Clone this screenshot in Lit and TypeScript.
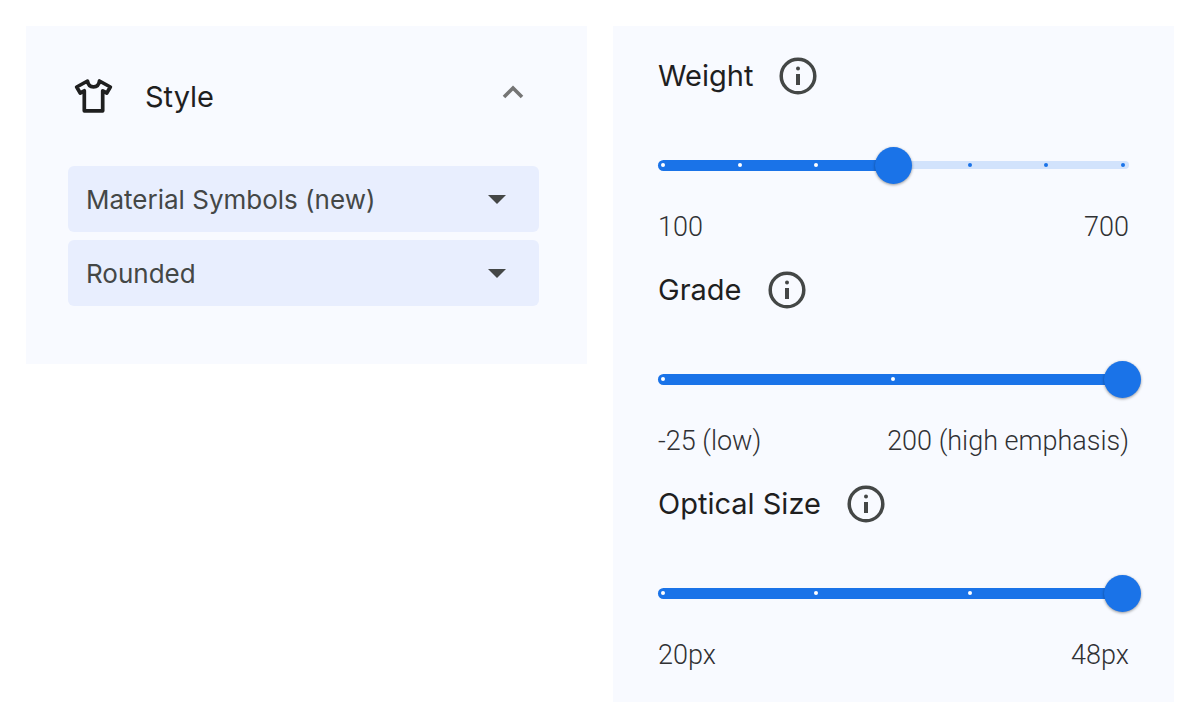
import { LitElement, html, css } from "lit";
import { customElement, property, state } from "lit/decorators.js";

@customElement("axis-slider")
class AxisSlider extends LitElement {
  @property() label = "";
  @property() low = "";
  @property() high = "";
  @property({ type: Number }) steps = 2;
  @property({ type: Number }) value = 0;

  static styles = css`
    :host {
      display: block;
      color: #1f1f1f;
    }
    .head {
      display: flex;
      align-items: center;
      gap: 25px;
      height: 40px;
      margin-bottom: 50px;
    }
    .name {
      font-size: 29px;
      line-height: 40px;
    }
    .info {
      display: flex;
      padding: 0;
      border: 0;
      background: none;
      color: #444746;
      cursor: pointer;
    }
    .slider {
      display: grid;
      align-items: center;
      height: 38px;
      margin-bottom: 28px;
    }
    .slider > * {
      grid-area: 1 / 1;
    }
    .track {
      height: 8px;
      border-radius: 4px;
      background: #d2e3fc;
    }
    .fill {
      height: 11px;
      border-radius: 6px;
      background: #1a73e8;
    }
    .ticks {
      display: flex;
      justify-content: space-between;
      padding: 0 4px 0 3px;
    }
    .tick {
      width: 4px;
      height: 4px;
      border-radius: 50%;
      background: #1a73e8;
    }
    .tick.on {
      background: #fff;
    }
    .range {
      appearance: none;
      height: 37px;
      margin: 0 -12px 0 -13px;
      background: none;
      cursor: pointer;
    }
    .range::-webkit-slider-thumb {
      appearance: none;
      width: 37px;
      height: 37px;
      border-radius: 50%;
      background: #1a73e8;
      box-shadow: 0 1px 3px rgba(0, 0, 0, 0.4);
    }
    .ends {
      display: flex;
      justify-content: space-between;
      color: #303134;
      font-size: 27px;
      line-height: 30px;
      font-family: Roboto, sans-serif;
      font-weight: 300;
    }
  `;

  render() {
    const ticks = Array.from({ length: this.steps + 1 }, (_, i) => i);
    return html`
      <div class="head">
        <label class="name" for="range">${this.label}</label>
        <button class="info" aria-label="About ${this.label}">
          <svg width="40" height="40" viewBox="0 0 40 40" fill="none">
            <circle cx="20" cy="20" r="16.8" stroke="currentColor" stroke-width="3.5" />
            <circle cx="20" cy="12.5" r="2" fill="currentColor" />
            <rect x="18" y="18" width="4" height="11" fill="currentColor" />
          </svg>
        </button>
      </div>
      <div class="slider">
        <div class="track"></div>
        <div class="fill" style="width: ${(this.value / this.steps) * 100}%"></div>
        <div class="ticks">
          ${ticks.map((i) => html`<span class="tick ${i <= this.value ? "on" : ""}"></span>`)}
        </div>
        <input
          class="range"
          id="range"
          type="range"
          min="0"
          max=${this.steps}
          .value=${String(this.value)}
          @input=${(e: Event) => (this.value = Number((e.target as HTMLInputElement).value))}
        />
      </div>
      <div class="ends"><span>${this.low}</span><span>${this.high}</span></div>
    `;
  }
}

@customElement("app-root")
class AppRoot extends LitElement {
  @state() open = true;

  static styles = css`
    :host {
      display: grid;
      grid-template-columns: 1fr 1fr;
      align-items: start;
      gap: 26px;
      padding: 26px;
      background: #fff;
      color: #1f1f1f;
      font-family: Inter, sans-serif;
    }
    .panel {
      background: #f8faff;
    }
    .style {
      padding: 46px 48px 58px 42px;
    }
    .toggle {
      display: flex;
      align-items: center;
      width: 100%;
      height: 48px;
      margin-bottom: 46px;
      padding: 0 15px 0 6px;
      border: 0;
      background: none;
      color: inherit;
      font: inherit;
      font-size: 29px;
      cursor: pointer;
    }
    .title {
      flex: 1;
      margin-left: 32px;
      text-align: left;
    }
    .chevron {
      margin-bottom: 8px;
    }
    .choices {
      display: grid;
      gap: 8px;
    }
    .choice {
      display: grid;
      align-items: center;
    }
    .choice > * {
      grid-area: 1 / 1;
    }
    .select {
      appearance: none;
      width: 100%;
      height: 66px;
      padding: 0 60px 0 18px;
      border: 0;
      border-radius: 6px;
      background: #e8eefe;
      color: #444746;
      font: inherit;
      font-size: 26px;
      cursor: pointer;
    }
    .arrow {
      justify-self: end;
      margin-right: 33px;
      pointer-events: none;
    }
    .axes {
      display: grid;
      gap: 28px;
      padding: 30px 45px 32px;
    }
  `;

  render() {
    const choice = (label: string, options: string[]) => html`
      <div class="choice">
        <select class="select" aria-label=${label}>
          ${options.map((o) => html`<option>${o}</option>`)}
        </select>
        <svg class="arrow" width="18" height="9" viewBox="0 0 18 9">
          <path d="M0 0h18L9 9z" fill="#444746" />
        </svg>
      </div>
    `;
    return html`
      <section class="panel style">
        <button class="toggle" aria-expanded=${this.open} @click=${() => (this.open = !this.open)}>
          <svg width="39" height="34" viewBox="0 0 39 34" fill="none" stroke="#1f1f1f" stroke-width="3.7">
            <path
              d="M13.5 2L2.700 8L6.200 14L10.300 11.800V31.800H28.700V11.800L32.800 14L36.300 8L25.500 2C25 5.800 22.700 7.800 19.500 7.800S14 5.800 13.500 2Z"
              stroke-linejoin="round"
            />
          </svg>
          <span class="title">Style</span>
          <svg class="chevron" width="22" height="14" viewBox="0 0 22 14">
            <path d="M2 12l9-9 9 9" fill="none" stroke="#757575" stroke-width="3.600" />
          </svg>
        </button>
        ${this.open
          ? html`<div class="choices">
              ${choice("Icon set", ["Material Symbols (new)"])} ${choice("Icon style", ["Rounded"])}
            </div>`
          : null}
      </section>
      <section class="panel axes">
        <axis-slider label="Weight" low="100" high="700" .steps=${6} .value=${3}></axis-slider>
        <axis-slider label="Grade" low="-25 (low)" high="200 (high emphasis)" .steps=${2} .value=${2}></axis-slider>
        <axis-slider label="Optical Size" low="20px" high="48px" .steps=${3} .value=${3}></axis-slider>
      </section>
    `;
  }
}
